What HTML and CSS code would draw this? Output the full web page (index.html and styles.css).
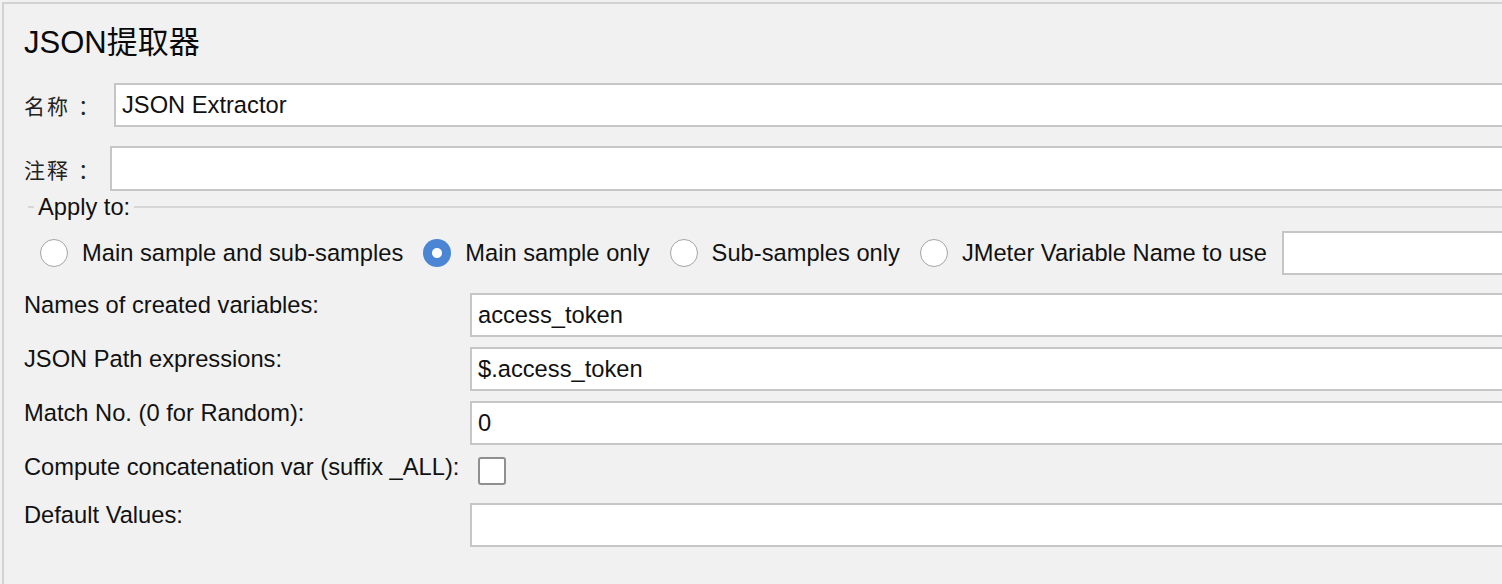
FILE: index.html
```html
<!DOCTYPE html>
<html lang="zh">
<head>
<meta charset="utf-8">
<title>JSON提取器</title>
<link rel="stylesheet" href="styles.css">
</head>
<body>
<div class="panel">
  <h1 class="title">JSON提取器</h1>

  <div class="row name-row">
    <label class="cjk-label name-label">名称<span class="colon">：</span></label>
    <input class="field" type="text" value="JSON Extractor" readonly>
  </div>

  <div class="row comment-row">
    <label class="cjk-label comment-label">注释<span class="colon">：</span></label>
    <input class="field comment-field" type="text" value="" readonly>
  </div>

  <div class="group">
    <div class="group-head">
      <span class="dash"></span>
      <span class="group-title">Apply to:</span>
      <span class="rule"></span>
    </div>
    <div class="radios">
      <label class="radio-item"><input class="radio" type="radio" name="scope"><span>Main sample and sub-samples</span></label>
      <label class="radio-item"><input class="radio" type="radio" name="scope" checked><span>Main sample only</span></label>
      <label class="radio-item"><input class="radio" type="radio" name="scope"><span>Sub-samples only</span></label>
      <label class="radio-item"><input class="radio" type="radio" name="scope"><span>JMeter Variable Name to use</span></label>
      <input class="field var-field" type="text" value="" readonly>
    </div>
  </div>

  <div class="form-grid">
    <label class="grid-label">Names of created variables:</label>
    <input class="field" type="text" value="access_token" readonly>

    <label class="grid-label">JSON Path expressions:</label>
    <input class="field" type="text" value="$.access_token" readonly>

    <label class="grid-label">Match No. (0 for Random):</label>
    <input class="field" type="text" value="0" readonly>

    <label class="grid-label">Compute concatenation var (suffix _ALL):</label>
    <div class="check-cell"><input class="checkbox" type="checkbox"></div>

    <label class="grid-label">Default Values:</label>
    <input class="field" type="text" value="" readonly>
  </div>
</div>
</body>
</html>
```

FILE: styles.css
```css
html, body {
  margin: 0;
  padding: 0;
  background: #f1f1f1;
  overflow: hidden;
}

body {
  font-family: "Liberation Sans", "Noto Sans CJK SC", sans-serif;
  font-size: 23.7px;
  color: #111;
  height: 584px;
}

.panel {
  margin: 2px 0 0 2px;
  border-top: 2px solid #d2d2d2;
  border-left: 2px solid #d2d2d2;
  padding-left: 20px;
  height: 600px;
}

.title {
  margin: 21px 0 0 0;
  font-size: 31px;
  line-height: 36px;
  font-weight: normal;
  color: #0a0a0a;
}

.row {
  display: flex;
  align-items: center;
}

.name-row {
  margin-top: 22px;
  height: 44px;
}

.comment-row {
  margin-top: 19px;
  height: 45px;
}

.cjk-label {
  font-family: "Noto Sans CJK SC", sans-serif;
  font-size: 21px;
  letter-spacing: 2px;
  color: #222;
  flex: none;
  white-space: nowrap;
}

.colon {
  margin-left: 8px;
}

.name-label { width: 90px; }
.comment-label { width: 86px; }

.field {
  box-sizing: border-box;
  flex: 1;
  min-width: 0;
  height: 100%;
  margin: 0;
  padding: 0 0 0 6px;
  border: 2px solid #c6c6c6;
  border-right: none;
  border-radius: 0;
  background: #fff;
  font-family: "Liberation Sans", sans-serif;
  font-size: 23.7px;
  color: #111;
  outline: none;
}

.group {
  margin-top: 4px;
}

.group-head {
  display: flex;
  align-items: center;
  height: 24px;
  margin-left: 4px;
}

.dash {
  width: 6px;
  height: 2px;
  background: #d6d6d6;
  flex: none;
}

.group-title {
  padding: 0 4px;
  line-height: 24px;
  flex: none;
}

.rule {
  flex: 1;
  height: 2px;
  background: #d6d6d6;
}

.radios {
  display: flex;
  align-items: center;
  height: 44px;
  margin-top: 12px;
  padding-left: 16px;
}

.radio-item {
  display: flex;
  align-items: center;
  gap: 14px;
  margin-right: 20px;
  flex: none;
}

.radio {
  appearance: none;
  -webkit-appearance: none;
  box-sizing: border-box;
  width: 28px;
  height: 28px;
  margin: 0;
  border-radius: 50%;
  border: 1.5px solid #a4a4a4;
  background: #fff;
  flex: none;
}

.radio:checked {
  border: none;
  background: radial-gradient(circle, #ffffff 0 4.5px, #4a86d4 5.5px);
}

.var-field {
  margin-left: -5px;
  height: 44px;
}

.form-grid {
  display: grid;
  grid-template-columns: 446px 1fr;
  grid-template-rows: 44px 44px 44px 38px 44px;
  row-gap: 10px;
  margin-top: 18px;
}

.grid-label {
  line-height: 24px;
  align-self: start;
  white-space: nowrap;
}

.check-cell {
  padding: 2px 0 0 8px;
}

.checkbox {
  appearance: none;
  -webkit-appearance: none;
  box-sizing: border-box;
  width: 28px;
  height: 28px;
  margin: 0;
  border: 2px solid #8f8f8f;
  border-radius: 3px;
  background: #fff;
}
```
